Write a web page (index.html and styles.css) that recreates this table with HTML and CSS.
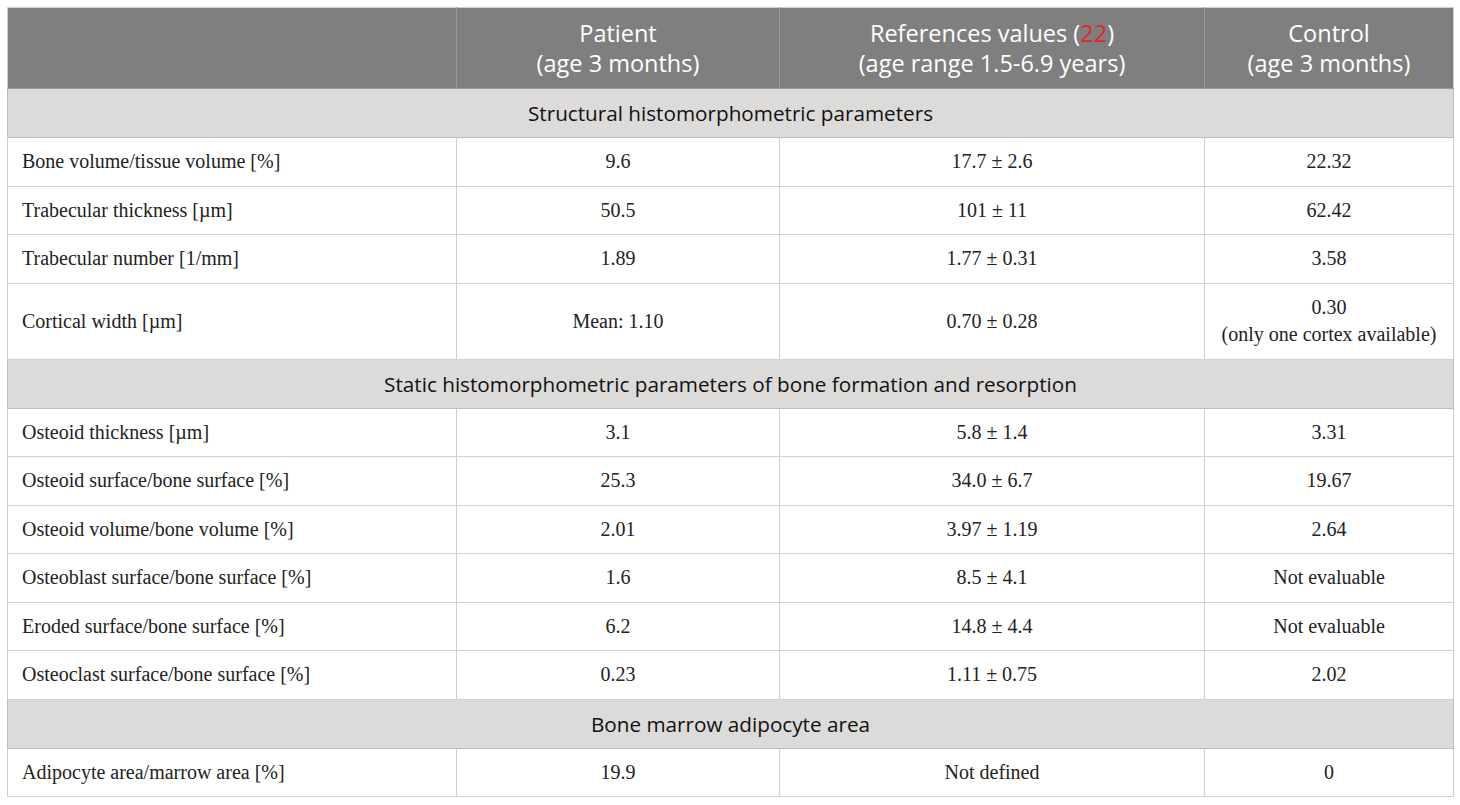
FILE: index.html
```html
<!DOCTYPE html>
<html>
<head>
<meta charset="utf-8">
<link rel="stylesheet" href="styles.css">
</head>
<body>
<table class="tbl">
  <colgroup>
    <col class="c1"><col class="c2"><col class="c3"><col class="c4">
  </colgroup>
  <thead>
    <tr class="head">
      <th></th>
      <th>Patient<br>(age 3 months)</th>
      <th>References values (<span class="ref">22</span>)<br>(age range 1.5-6.9 years)</th>
      <th>Control<br>(age 3 months)</th>
    </tr>
  </thead>
  <tbody>
    <tr class="sec"><td colspan="4">Structural histomorphometric parameters</td></tr>
    <tr class="row"><td>Bone volume/tissue volume [%]</td><td>9.6</td><td>17.7 ± 2.6</td><td>22.32</td></tr>
    <tr class="row"><td>Trabecular thickness [µm]</td><td>50.5</td><td>101 ± 11</td><td>62.42</td></tr>
    <tr class="row"><td>Trabecular number [1/mm]</td><td>1.89</td><td>1.77 ± 0.31</td><td>3.58</td></tr>
    <tr class="row tall"><td>Cortical width [µm]</td><td>Mean: 1.10</td><td>0.70 ± 0.28</td><td>0.30<br>(only one cortex available)</td></tr>
    <tr class="sec"><td colspan="4">Static histomorphometric parameters of bone formation and resorption</td></tr>
    <tr class="row"><td>Osteoid thickness [µm]</td><td>3.1</td><td>5.8 ± 1.4</td><td>3.31</td></tr>
    <tr class="row"><td>Osteoid surface/bone surface [%]</td><td>25.3</td><td>34.0 ± 6.7</td><td>19.67</td></tr>
    <tr class="row"><td>Osteoid volume/bone volume [%]</td><td>2.01</td><td>3.97 ± 1.19</td><td>2.64</td></tr>
    <tr class="row"><td>Osteoblast surface/bone surface [%]</td><td>1.6</td><td>8.5 ± 4.1</td><td>Not evaluable</td></tr>
    <tr class="row"><td>Eroded surface/bone surface [%]</td><td>6.2</td><td>14.8 ± 4.4</td><td>Not evaluable</td></tr>
    <tr class="row"><td>Osteoclast surface/bone surface [%]</td><td>0.23</td><td>1.11 ± 0.75</td><td>2.02</td></tr>
    <tr class="sec"><td colspan="4">Bone marrow adipocyte area</td></tr>
    <tr class="row"><td>Adipocyte area/marrow area [%]</td><td>19.9</td><td>Not defined</td><td>0</td></tr>
  </tbody>
</table>
</body>
</html>
```

FILE: styles.css
```css
html, body {
  margin: 0;
  padding: 0;
  background: #ffffff;
}
body {
  padding: 7px 0 0 7px;
}
.tbl {
  border-collapse: collapse;
  table-layout: fixed;
  width: 1446px;
}
.c1 { width: 449px; }
.c2 { width: 323px; }
.c3 { width: 425px; }
.c4 { width: 249px; }
.tbl td, .tbl th {
  border: 1px solid #cfcfcf;
  padding: 0;
}
.head th {
  background: #7f7f7f;
  color: #ffffff;
  font-family: "Open Sans", "Noto Sans", sans-serif;
  font-weight: 400;
  font-size: 23.5px;
  line-height: 30px;
  height: 80px;
  text-align: center;
  vertical-align: middle;
  border-color: #9a9a9a;
  padding-bottom: 0;
}
.head th:first-child { border-left-color: #cfcfcf; }
.head th:last-child { border-right-color: #cfcfcf; }
.head th { border-top-color: #cfcfcf; }
.ref { color: #e0262a; }
.sec td {
  background: #dcdbda;
  color: #111111;
  font-family: "Open Sans", "Noto Sans", sans-serif;
  font-size: 20.7px;
  height: 48px;
  text-align: center;
  vertical-align: middle;
  border-color: #bdbdbd;
}
.row td {
  font-family: "Liberation Serif", "Times New Roman", serif;
  font-size: 20px;
  color: #222222;
  height: 47.5px;
  text-align: center;
  vertical-align: middle;
  line-height: 27px;
}
.row td:first-child {
  text-align: left;
  padding-left: 14px;
}
.row.tall td { height: 75px; }
```
